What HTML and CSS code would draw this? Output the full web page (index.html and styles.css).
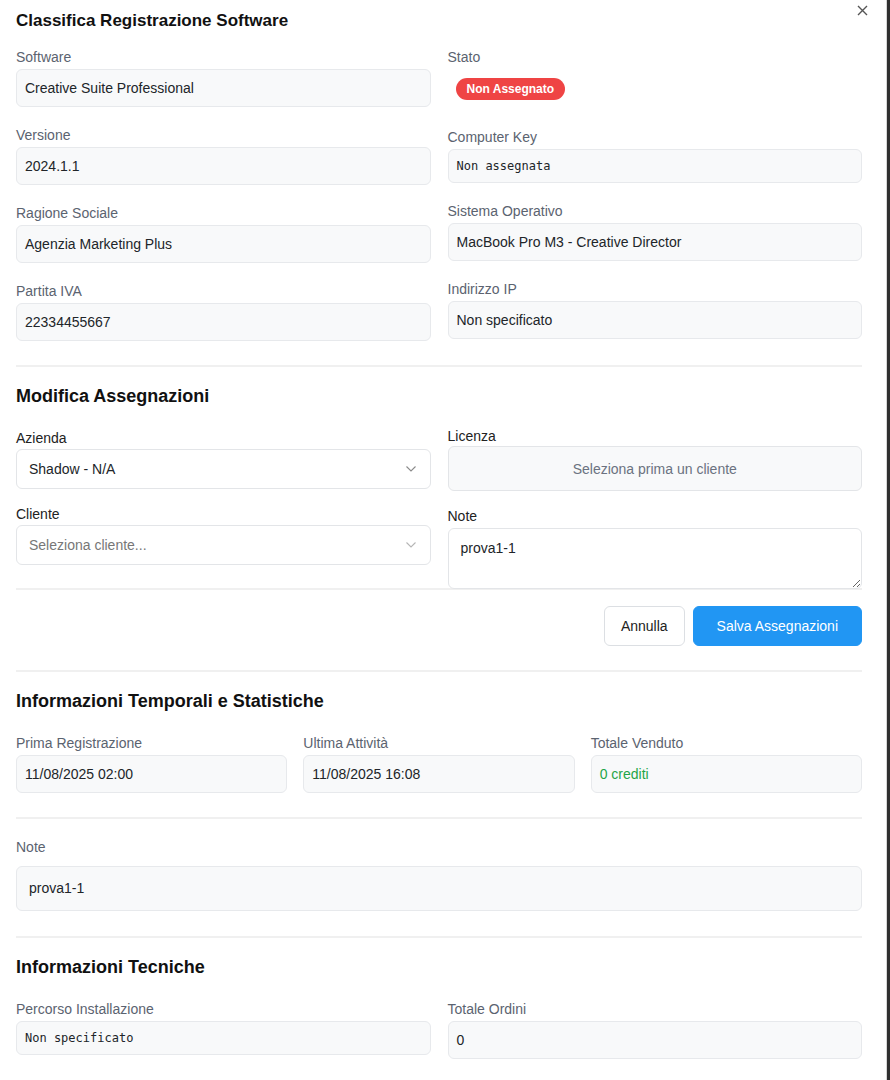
FILE: index.html
```html
<!DOCTYPE html>
<html lang="it">
<head>
<meta charset="utf-8">
<title>Classifica Registrazione Software</title>
<link rel="stylesheet" href="styles.css">
</head>
<body>
<div class="modal">
  <header class="head">
    <h2 class="title">Classifica Registrazione Software</h2>
    <button class="close" aria-label="Chiudi">
      <svg width="11" height="11" viewBox="0 0 11 11"><path d="M1 1L10 10M10 1L1 10" stroke="#555" stroke-width="1.4" fill="none"/></svg>
    </button>
  </header>

  <div class="info-grid">
    <div class="col">
      <div class="field"><div class="lbl">Software</div><div class="val">Creative Suite Professional</div></div>
      <div class="field"><div class="lbl">Versione</div><div class="val">2024.1.1</div></div>
      <div class="field"><div class="lbl">Ragione Sociale</div><div class="val">Agenzia Marketing Plus</div></div>
      <div class="field"><div class="lbl">Partita IVA</div><div class="val">22334455667</div></div>
    </div>
    <div class="col">
      <div class="field"><div class="lbl">Stato</div><div class="badge-wrap"><span class="badge">Non Assegnato</span></div></div>
      <div class="field"><div class="lbl">Computer Key</div><div class="val mono">Non assegnata</div></div>
      <div class="field"><div class="lbl">Sistema Operativo</div><div class="val">MacBook Pro M3 - Creative Director</div></div>
      <div class="field"><div class="lbl">Indirizzo IP</div><div class="val">Non specificato</div></div>
    </div>
  </div>

  <section class="sec">
    <h3 class="sec-title">Modifica Assegnazioni</h3>
    <div class="form-grid">
      <div class="fcol fcol-left">
        <div class="ffield">
          <div class="flbl">Azienda</div>
          <div class="select"><span>Shadow - N/A</span>
            <svg width="10" height="6" viewBox="0 0 10 6"><path d="M0.5 0.5L5 5L9.5 0.5" stroke="#8a8a8a" stroke-width="1.1" fill="none"/></svg>
          </div>
        </div>
        <div class="ffield">
          <div class="flbl">Cliente</div>
          <div class="select placeholder"><span>Seleziona cliente...</span>
            <svg width="10" height="6" viewBox="0 0 10 6"><path d="M0.5 0.5L5 5L9.5 0.5" stroke="#b5b5b5" stroke-width="1.1" fill="none"/></svg>
          </div>
        </div>
      </div>
      <div class="fcol">
        <div class="ffield">
          <div class="flbl flbl-tight">Licenza</div>
          <div class="disabled-box">Seleziona prima un cliente</div>
        </div>
        <div class="ffield">
          <div class="flbl">Note</div>
          <textarea class="note-area" readonly>prova1-1</textarea>
        </div>
      </div>
    </div>
    <div class="rule"></div>
    <div class="actions">
      <button class="btn btn-light">Annulla</button>
      <button class="btn btn-primary">Salva Assegnazioni</button>
    </div>
  </section>

  <section class="sec">
    <h3 class="sec-title">Informazioni Temporali e Statistiche</h3>
    <div class="three">
      <div><div class="lbl">Prima Registrazione</div><div class="val">11/08/2025 02:00</div></div>
      <div><div class="lbl">Ultima Attività</div><div class="val">11/08/2025 16:08</div></div>
      <div><div class="lbl">Totale Venduto</div><div class="val green">0 crediti</div></div>
    </div>
  </section>

  <section class="sec sec-note">
    <div class="lbl lbl-note">Note</div>
    <div class="val val-note">prova1-1</div>
  </section>

  <section class="sec sec-tech">
    <h3 class="sec-title">Informazioni Tecniche</h3>
    <div class="two">
      <div><div class="lbl">Percorso Installazione</div><div class="val mono">Non specificato</div></div>
      <div><div class="lbl">Totale Ordini</div><div class="val">0</div></div>
    </div>
  </section>
</div>
</body>
</html>
```

FILE: styles.css
```css
* { box-sizing: border-box; }

html, body {
  margin: 0;
  padding: 0;
}

body {
  background: #2f2f2f;
  font-family: "Liberation Sans", Arial, sans-serif;
  font-size: 14px;
  line-height: 20px;
  color: #212529;
  overflow: hidden;
}

.modal {
  width: 887px;
  min-height: 1080px;
  background: #ffffff;
  border-right: 1px solid #d6d6d6;
  padding: 9px 24px 0 16px;
}

.head {
  display: flex;
  justify-content: space-between;
  align-items: flex-start;
}

.title {
  margin: 0;
  font-size: 17px;
  line-height: 24px;
  font-weight: 700;
  color: #111;
}

.close {
  border: 0;
  background: none;
  padding: 0;
  margin: -4px -6px 0 0;
  width: 11px;
  height: 11px;
  display: flex;
  cursor: pointer;
}

.info-grid {
  margin-top: 14px;
  display: grid;
  grid-template-columns: 1fr 1fr;
  column-gap: 17px;
  align-items: start;
}

.col {
  display: flex;
  flex-direction: column;
  gap: 18px;
}

.lbl {
  color: #5b6370;
  font-size: 14px;
  line-height: 20px;
  margin-bottom: 2px;
}

.val {
  background: #f8f9fa;
  border: 1px solid #e7e9ec;
  border-radius: 6px;
  padding: 8px 8px;
  line-height: 20px;
  color: #212529;
  min-height: 38px;
}

.val.mono {
  font-family: "DejaVu Sans Mono", "Liberation Mono", monospace;
  font-size: 12px;
  line-height: 16px;
  min-height: 34px;
}

.badge-wrap {
  height: 40px;
  display: flex;
  align-items: center;
  padding-left: 8px;
}

.badge {
  background: #ef4444;
  color: #fff;
  font-size: 12px;
  font-weight: 700;
  line-height: 16px;
  padding: 3px 11px;
  border-radius: 11px;
}

.sec {
  margin-top: 24px;
  border-top: 2px solid #f0f0f0;
  padding-top: 17px;
}

.sec-title {
  margin: 0 0 20px;
  font-size: 18px;
  line-height: 24px;
  font-weight: 700;
  color: #111;
}

.form-grid {
  display: grid;
  grid-template-columns: 1fr 1fr;
  column-gap: 17px;
  margin-top: -2px;
}

.fcol {
  display: flex;
  flex-direction: column;
  gap: 15px;
}

.fcol-left { padding-top: 2px; }

.flbl {
  color: #222;
  line-height: 20px;
  margin-bottom: 1px;
}

.flbl-tight { margin-bottom: 0; }

.select {
  height: 40px;
  border: 1px solid #e3e5e8;
  border-radius: 6px;
  background: #fff;
  padding: 0 14px 0 12px;
  display: flex;
  align-items: center;
  justify-content: space-between;
  color: #212529;
}

.select.placeholder { color: #777; }

.disabled-box {
  height: 45px;
  border: 1px solid #e3e5e8;
  border-radius: 6px;
  background: #f8f9fa;
  display: flex;
  align-items: center;
  justify-content: center;
  color: #6b7280;
}

.note-area {
  display: block;
  width: 100%;
  height: 61px;
  margin-top: 2px;
  border: 1px solid #e3e5e8;
  border-radius: 6px;
  background: #fff;
  padding: 9px 12px;
  font-family: "Liberation Sans", Arial, sans-serif;
  font-size: 14px;
  line-height: 20px;
  color: #212529;
  resize: vertical;
  outline: none;
}

.rule {
  height: 2px;
  background: #f0f0f0;
  margin-top: -1px;
}

.actions {
  display: flex;
  justify-content: flex-end;
  gap: 8px;
  margin-top: 16px;
}

.btn {
  font-family: "Liberation Sans", Arial, sans-serif;
  font-size: 14px;
  line-height: 20px;
  height: 40px;
  border-radius: 6px;
  cursor: pointer;
}

.btn-light {
  background: #fff;
  border: 1px solid #dcdfe3;
  color: #222;
  padding: 0 16px;
}

.btn-primary {
  background: #2196f3;
  border: 1px solid #2196f3;
  color: #fff;
  padding: 0 23px;
}

.three {
  display: grid;
  grid-template-columns: 1fr 1fr 1fr;
  column-gap: 16px;
}

.green { color: #1fa548; }

.sec-note { padding-top: 18px; }

.lbl-note { margin-bottom: 9px; }

.val-note {
  padding: 12px 12px;
  line-height: 19px;
  min-height: 45px;
}

.sec-tech { margin-top: 25px; }

.two {
  display: grid;
  grid-template-columns: 1fr 1fr;
  column-gap: 17px;
  align-items: start;
}
```
